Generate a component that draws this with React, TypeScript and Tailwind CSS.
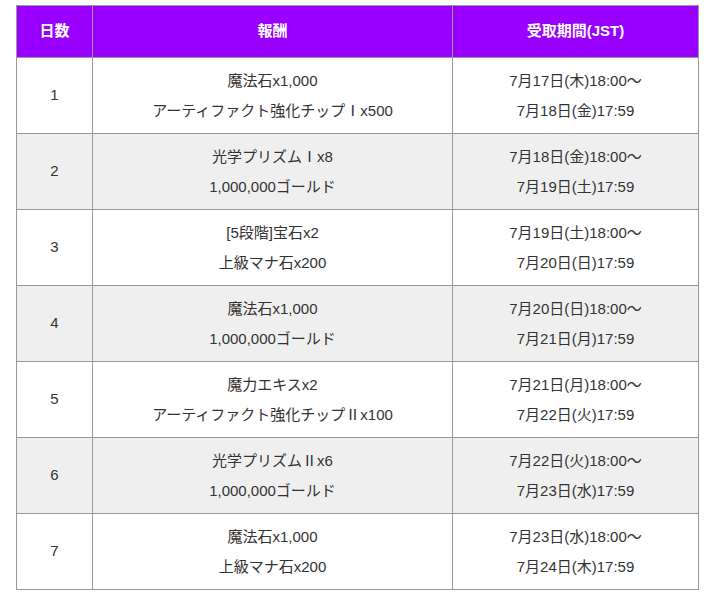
const rows = [
  { day: '1', rewards: ['魔法石x1,000', 'アーティファクト強化チップⅠx500'], period: ['7月17日(木)18:00〜', '7月18日(金)17:59'] },
  { day: '2', rewards: ['光学プリズムⅠx8', '1,000,000ゴールド'], period: ['7月18日(金)18:00〜', '7月19日(土)17:59'] },
  { day: '3', rewards: ['[5段階]宝石x2', '上級マナ石x200'], period: ['7月19日(土)18:00〜', '7月20日(日)17:59'] },
  { day: '4', rewards: ['魔法石x1,000', '1,000,000ゴールド'], period: ['7月20日(日)18:00〜', '7月21日(月)17:59'] },
  { day: '5', rewards: ['魔力エキスx2', 'アーティファクト強化チップⅡx100'], period: ['7月21日(月)18:00〜', '7月22日(火)17:59'] },
  { day: '6', rewards: ['光学プリズムⅡx6', '1,000,000ゴールド'], period: ['7月22日(火)18:00〜', '7月23日(水)17:59'] },
  { day: '7', rewards: ['魔法石x1,000', '上級マナ石x200'], period: ['7月23日(水)18:00〜', '7月24日(木)17:59'] },
];

export default function App() {
  return (
    <div className="min-h-[597px] bg-white pt-[5px] pl-[16px] font-['Liberation_Sans','Noto_Sans_CJK_JP',sans-serif] text-[15px] text-[#333]">
      <table className="w-[682px] table-fixed border-collapse">
        <colgroup>
          <col className="w-[76px]" />
          <col className="w-[360px]" />
          <col className="w-[246px]" />
        </colgroup>
        <thead>
          <tr className="h-[52px] bg-[#9900ff] text-white">
            <th className="border border-[#999] text-center font-bold">日数</th>
            <th className="border border-[#999] text-center font-bold">報酬</th>
            <th className="border border-[#999] text-center font-bold">受取期間(JST)</th>
          </tr>
        </thead>
        <tbody>
          {rows.map((r, i) => (
            <tr key={r.day} className={i % 2 === 1 ? 'h-[76px] bg-[#efefef]' : 'h-[76px] bg-white'}>
              <td className="border border-[#999] text-center">{r.day}</td>
              <td className="border border-[#999] text-center leading-[30px]">
                {r.rewards.map(t => <div key={t}>{t}</div>)}
              </td>
              <td className="border border-[#999] text-center leading-[30px]">
                {r.period.map(t => <div key={t}>{t}</div>)}
              </td>
            </tr>
          ))}
        </tbody>
      </table>
    </div>
  );
}
